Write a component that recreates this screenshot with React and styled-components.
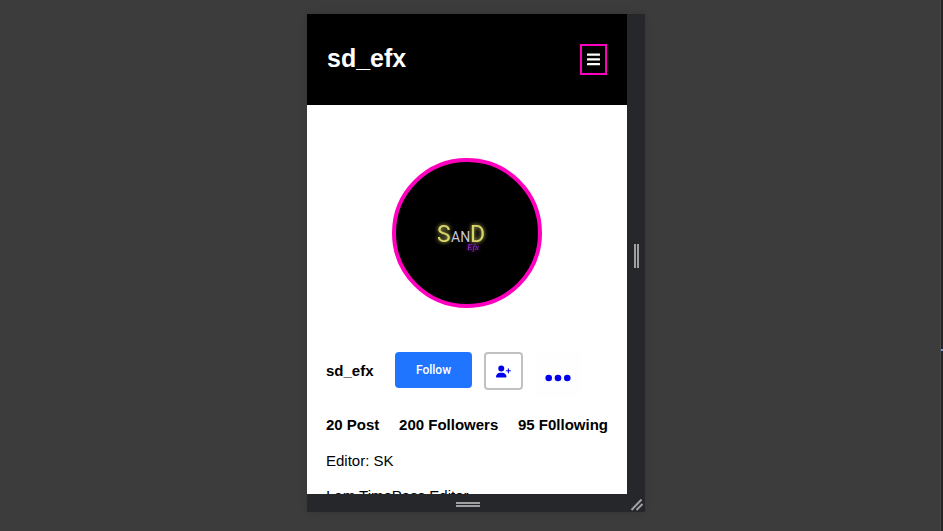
import React from "react";
import styled, { createGlobalStyle } from "styled-components";
import { FaUserPlus } from "react-icons/fa6";

const GlobalStyle = createGlobalStyle`
  *, *::before, *::after { box-sizing: border-box; }
  body {
    margin: 0;
    background: #3c3c3c;
    font-family: "Liberation Sans", Arial, sans-serif;
    font-size: 15px;
    color: #000;
  }
`;

const Workspace = styled.div`
  display: flex;
  height: 100vh;
`;

const Stage = styled.div`
  flex: 1;
  display: flex;
  justify-content: center;
  padding: 14px 0 19px 12px;
`;

const Edge = styled.div`
  width: 3px;
  background: #242528;
  border-left: 1px solid #4a4a4a;
  display: flex;
  flex-direction: column;
  justify-content: center;
`;

const EdgeMark = styled.span`
  height: 2px;
  margin-top: 168px;
  background: #6fa0ee;
`;

const Device = styled.div`
  display: grid;
  grid-template-columns: minmax(0, 320px) 18px;
  grid-template-rows: minmax(0, 1fr) 18px;
  background: #26272b;
  box-shadow: 0 0 8px rgba(0, 0, 0, 0.12);
`;

const Screen = styled.div`
  overflow: hidden;
  background: #fff;
`;

const Handle = styled.div`
  display: flex;
  align-items: center;
  justify-content: center;
  padding: 3px 0 0 2px;
  svg { display: block; }
`;

const Header = styled.header`
  display: flex;
  align-items: center;
  justify-content: space-between;
  height: 91px;
  padding: 0 20px;
  background: #000;
`;

const Brand = styled.h1`
  margin: 0;
  padding-bottom: 4px;
  font-size: 25px;
  line-height: 28px;
  color: #fff;
`;

const MenuButton = styled.button`
  display: grid;
  place-items: center;
  width: 27px;
  height: 31px;
  padding: 0;
  border: 2px solid #ff00bf;
  background: #000;
  color: #fff;
`;

const Profile = styled.main`
  padding: 53px 19px 0;
`;

const Avatar = styled.div`
  display: flex;
  flex-direction: column;
  align-items: center;
  justify-content: center;
  width: 150px;
  height: 150px;
  margin: 0 auto 44px;
  border: 4px solid #ff00bf;
  border-radius: 50%;
  background: #000;
`;

const Logo = styled.svg`
  display: block;
  overflow: visible;
`;

const Actions = styled.div`
  display: flex;
  align-items: flex-start;
  height: 46px;
`;

const Username = styled.strong`
  width: 69px;
  line-height: 38px;
`;

const FollowButton = styled.button`
  width: 77px;
  height: 36px;
  margin-right: 12px;
  padding: 0;
  border: 0;
  border-radius: 4px;
  background: #1f75ff;
  color: #fff;
  font: 500 12px/16px Roboto, sans-serif;
`;

const AddLink = styled.a`
  display: grid;
  place-items: center;
  width: 39px;
  height: 38px;
  margin-right: 12px;
  border: 2px solid #c3c0c3;
  border-radius: 4px;
  color: #0000ee;
`;

const MoreLink = styled.a`
  display: grid;
  place-items: center;
  width: 46px;
  height: 46px;
  padding-top: 6px;
  background: #fefefe;
  color: #0000ee;
`;

const Stats = styled.ul`
  display: flex;
  justify-content: space-between;
  margin: 18px 0 0;
  padding: 0;
  list-style: none;
  font-weight: bold;
  line-height: 18px;
  white-space: nowrap;
`;

const BioLine = styled.p`
  margin: 18px 0 0;
  line-height: 17px;
`;

function SandLogo() {
  return (
    <Logo width="60" height="36" viewBox="0 0 60 36" role="img" aria-label="SanD Efx">
      <defs>
        <filter id="glow" x="-50%" y="-50%" width="200%" height="200%">
          <feGaussianBlur stdDeviation="2" result="halo" />
          <feMerge>
            <feMergeNode in="halo" />
            <feMergeNode in="SourceGraphic" />
          </feMerge>
        </filter>
      </defs>
      <g fontFamily="Roboto, sans-serif">
        <g fill="#d8d66b" fontSize="23" filter="url(#glow)">
          <text x="0" y="27">S</text>
          <text x="33" y="27">D</text>
        </g>
        <text x="14" y="27" fontSize="14" fill="#c9c8d4">AN</text>
      </g>
      <text
        x="30"
        y="35"
        fontSize="9"
        fontStyle="italic"
        fontFamily="'Liberation Serif', serif"
        fill="#9a2bd6"
        filter="url(#glow)"
      >
        Efx
      </text>
    </Logo>
  );
}

export default function App() {
  return (
    <>
      <GlobalStyle />
      <Workspace>
        <Stage>
          <Device>
            <Screen>
              <Header>
                <Brand>sd_efx</Brand>
                <MenuButton type="button" aria-label="Menu">
                  <svg width="13" height="13" viewBox="0 0 13 13" fill="currentColor">
                    <rect y="0.4" width="13" height="2.3" rx="0.5" />
                    <rect y="5.2" width="13" height="2.3" rx="0.5" />
                    <rect y="10" width="13" height="2.3" rx="0.5" />
                  </svg>
                </MenuButton>
              </Header>
              <Profile>
                <Avatar><SandLogo /></Avatar>
                <Actions>
                  <Username>sd_efx</Username>
                  <FollowButton type="button">Follow</FollowButton>
                  <AddLink href="#add" aria-label="Add friend">
                    <FaUserPlus size={15} />
                  </AddLink>
                  <MoreLink href="#more" aria-label="More options">
                    <svg width="28" height="8" viewBox="0 0 28 8" fill="currentColor">
                      <circle cx="4.7" cy="4" r="3.3" />
                      <circle cx="14" cy="4" r="3.3" />
                      <circle cx="23.3" cy="4" r="3.3" />
                    </svg>
                  </MoreLink>
                </Actions>
                <Stats>
                  <li>20 Post</li>
                  <li>200 Followers</li>
                  <li>95 F0llowing</li>
                </Stats>
                <BioLine>Editor: SK</BioLine>
                <BioLine>I am TimePass Editor</BioLine>
              </Profile>
            </Screen>
            <Handle>
              <svg width="6" height="24" viewBox="0 0 6 24" fill="#a0a0a0">
                <rect width="2" height="24" />
                <rect x="3" width="2" height="24" />
              </svg>
            </Handle>
            <Handle>
              <svg width="24" height="6" viewBox="0 0 24 6" fill="#a0a0a0">
                <rect width="24" height="2" />
                <rect y="3" width="24" height="2" />
              </svg>
            </Handle>
            <Handle>
              <svg width="14" height="14" viewBox="0 0 14 14" stroke="#a0a0a0" strokeWidth="2">
                <path d="M1.500 12 11.500 1.500M6.500 12 12.500 6" />
              </svg>
            </Handle>
          </Device>
        </Stage>
        <Edge><EdgeMark /></Edge>
      </Workspace>
    </>
  );
}
